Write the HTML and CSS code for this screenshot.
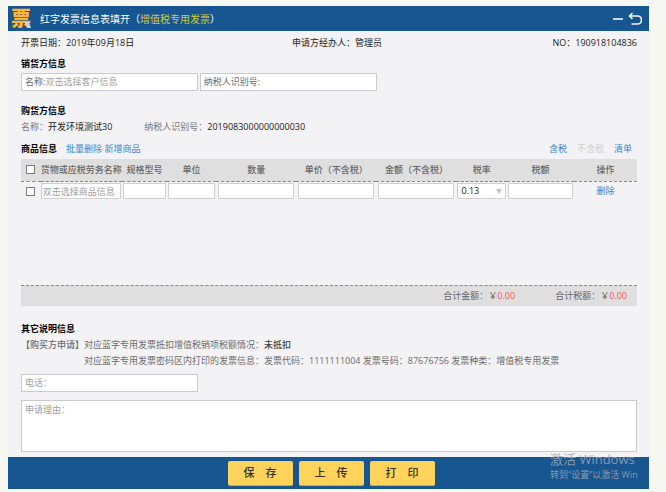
FILE: index.html
```html
<!DOCTYPE html>
<html lang="zh-CN">
<head>
<meta charset="utf-8">
<meta name="viewport" content="width=device-width, initial-scale=1">
<title>红字发票信息表填开</title>
<link rel="stylesheet" href="styles.css">
</head>
<body>
<div class="app">
  <header class="titlebar">
    <span class="logo">票<svg class="logo-fold" viewBox="0 0 6 6" aria-hidden="true"><path d="M0 0h4l2 6H2z"/></svg></span>
    <h1 class="title">红字发票信息表填开（<span class="title-type">增值税专用发票</span>）</h1>
    <button class="icon-btn" type="button" aria-label="最小化"><svg width="12" height="14" viewBox="0 0 12 14"><path d="M1 7h10"/></svg></button>
    <button class="icon-btn" type="button" aria-label="返回"><svg width="14" height="14" viewBox="0 0 14 14"><path d="M2 4H9.500a3.500 3.500 0 0 1 0 8H3.500M4.500 1 1.500 4l3 3"/></svg></button>
  </header>

  <main class="content">
    <div class="meta">
      <span>开票日期：2019年09月18日</span>
      <span>申请方经办人：管理员</span>
      <span>NO：190918104836</span>
    </div>

    <section class="seller">
      <h2>销货方信息</h2>
      <div class="fields">
        <div class="field"><label for="name">名称:</label><input id="name" type="text" placeholder="双击选择客户信息"></div>
        <div class="field"><label for="taxno">纳税人识别号:</label><input id="taxno" type="text"></div>
      </div>
    </section>

    <section class="buyer">
      <h2>购货方信息</h2>
      <div class="buyer-row">
        <span>名称：<b>开发环境测试30</b></span>
        <span>纳税人识别号：<b>2019083000000000030</b></span>
      </div>
    </section>

    <section class="goods">
      <div class="goods-head">
        <h2>商品信息</h2>
        <div class="goods-edit"><a href="#">批量删除</a> <a href="#">新增商品</a></div>
        <nav class="goods-mode"><a href="#">含税</a><span class="off">不含税</span><a href="#">清单</a></nav>
      </div>
      <div class="goods-body">
        <table>
          <colgroup>
            <col class="c-check"><col class="c-item"><col class="c-spec"><col class="c-unit"><col class="c-num"><col class="c-num"><col class="c-num"><col class="c-rate"><col class="c-tax"><col class="c-op">
          </colgroup>
          <thead>
            <tr>
              <th class="check"><input type="checkbox" aria-label="全选"></th>
              <th class="item">货物或应税劳务名称</th><th>规格型号</th><th>单位</th><th>数量</th><th>单价（不含税）</th><th>金额（不含税）</th><th>税率</th><th>税额</th><th>操作</th>
            </tr>
          </thead>
          <tbody>
            <tr>
              <td class="check"><input type="checkbox" aria-label="选择"></td>
              <td class="item"><input class="cell" type="text" aria-label="货物或应税劳务名称" placeholder="双击选择商品信息"></td>
              <td><input class="cell" type="text" aria-label="规格型号"></td>
              <td><input class="cell" type="text" aria-label="单位"></td>
              <td class="wide"><input class="cell" type="text" aria-label="数量"></td>
              <td class="wide"><input class="cell" type="text" aria-label="单价"></td>
              <td class="wide"><input class="cell" type="text" aria-label="金额"></td>
              <td><div class="select"><select class="cell" aria-label="税率"><option>0.13</option></select></div></td>
              <td><input class="cell" type="text" aria-label="税额"></td>
              <td><a href="#">删除</a></td>
            </tr>
          </tbody>
        </table>
      </div>
      <div class="totals">
        <span>合计金额：￥<em>0.00</em></span>
        <span>合计税额：￥<em>0.00</em></span>
      </div>
    </section>

    <section class="notes">
      <h2>其它说明信息</h2>
      <div class="notes-row">
        <strong>【购买方申请】</strong>
        <div>
          <p>对应蓝字专用发票抵扣增值税销项税额情况：<b>未抵扣</b></p>
          <p>对应蓝字专用发票密码区内打印的发票信息：发票代码：1111111004 发票号码：87676756 发票种类：增值税专用发票</p>
        </div>
      </div>
      <div class="field phone"><input type="text" aria-label="电话" placeholder="电话："></div>
      <textarea class="reason" aria-label="申请理由" placeholder="申请理由："></textarea>
    </section>
  </main>

  <footer class="actions">
    <button type="button">保　存</button>
    <button type="button">上　传</button>
    <button type="button">打　印</button>
  </footer>
  <div class="watermark"><p class="watermark-title">激活 Windows</p><p>转到“设置”以激活 Win</p></div>
</div>
</body>
</html>
```
FILE: styles.css
```css
* {
  box-sizing: border-box;
}

body {
  margin: 0;
  padding: 6px 17px 3px 8px;
  background: #f8f8f2;
  color: #1c1c1c;
  font: 9px/16px "Open Sans", "Noto Sans CJK SC", sans-serif;
}

h1, h2, p {
  margin: 0;
}

h2 {
  font-size: 9px;
  font-weight: 700;
  color: #000;
}

b {
  font-weight: 400;
  color: #1c1c1c;
}

a {
  color: #3c87d0;
  text-decoration: none;
}

input, select, textarea, button {
  font: inherit;
  color: inherit;
  margin: 0;
}

::placeholder {
  color: #a0a0a0;
  opacity: 1;
}

.app {
  position: relative;
  overflow: hidden;
  background: #f3f2f4;
}

/* Title bar */
.titlebar {
  display: flex;
  align-items: center;
  height: 25px;
  padding: 0 7px 0 3px;
  background: #175691;
  color: #fff;
}

.logo {
  position: relative;
  margin-right: 9px;
  font-size: 20px;
  font-weight: 900;
  line-height: 24px;
  color: #fbb829;
}

.logo-fold {
  position: absolute;
  right: 0;
  bottom: 3px;
  width: 6px;
  height: 6px;
  fill: #c9d3dd;
}

.title {
  flex: 1;
  font-size: 10px;
  font-weight: 400;
}

.title-type {
  color: #d3ca35;
}

.icon-btn {
  display: flex;
  margin-left: 4px;
  padding: 0;
  border: 0;
  background: none;
}

.icon-btn path {
  fill: none;
  stroke: #f4f8fc;
  stroke-width: 1.6;
}

/* Form body */
.content {
  padding: 4px 12px 5px 13px;
}

.meta {
  display: grid;
  grid-template-columns: 44% 1fr auto;
  margin-bottom: 5px;
}

.fields {
  display: flex;
  gap: 2px;
  margin: 1px 0 12px;
}

.field {
  display: flex;
  align-items: center;
  width: 28.7%;
  height: 18px;
  padding: 0 3px;
  border: 1px solid #cbcbcf;
  background: #fff;
  color: #6c6c6c;
}

.field label {
  flex: none;
}

.field input {
  flex: 1;
  min-width: 0;
  height: 16px;
  padding: 0;
  border: 0;
  background: none;
  outline: 0;
}

.buyer-row {
  display: flex;
  gap: 32px;
  color: #7a7a7a;
}

.goods-head {
  display: flex;
  margin: 6px 0 2px;
}

.goods-edit {
  margin-left: 9px;
}

.goods-mode {
  display: flex;
  gap: 10px;
  margin-left: auto;
  padding-right: 5px;
}

.off {
  color: #cfcfd1;
}

.goods-body {
  min-height: 126px;
}

table {
  width: 100%;
  table-layout: fixed;
  border-collapse: collapse;
}

.c-check { width: 3.2%; }
.c-item { width: 13.2%; }
.c-spec { width: 7.3%; }
.c-unit { width: 8%; }
.c-num { width: 13%; }
.c-rate { width: 8.2%; }
.c-tax { width: 10.9%; }
.c-op { width: 10.2%; }

th {
  height: 22px;
  padding: 0;
  border-bottom: 1px dashed #8a8a8a;
  background: #dfdfe0;
  color: #666;
  font-weight: 500;
  white-space: nowrap;
}

td {
  height: 20px;
  padding: 1px 1px;
  text-align: center;
}

td.wide {
  padding: 1px 2px;
}

.check {
  padding: 0 0 0 5px;
  text-align: left;
}

.item {
  padding-left: 0;
  text-align: left;
}

input[type="checkbox"] {
  display: block;
  appearance: none;
  width: 9px;
  height: 9px;
  border: 1px solid #7d7d7d;
  background: #fff;
}

input[type="checkbox"]:checked {
  background: #175691;
}

.cell {
  display: block;
  width: 100%;
  height: 16px;
  padding: 0 1px;
  border: 1px solid #d0d0d4;
  border-radius: 0;
  background: #fff;
  line-height: 14px;
  outline: 0;
}

.select {
  position: relative;
}

.select .cell {
  appearance: none;
  padding-left: 3px;
}

.select::after {
  content: "";
  position: absolute;
  top: 6px;
  right: 4px;
  border: 3px solid transparent;
  border-top: 5px solid #c4c4c8;
  border-bottom: 0;
  pointer-events: none;
}

.totals {
  display: flex;
  justify-content: flex-end;
  gap: 40px;
  height: 21px;
  padding: 2px 10px 0 0;
  border-top: 1px dashed #8a8a8a;
  background: #dfdfe0;
  color: #666;
}

.totals em {
  color: #f0585c;
  font-style: normal;
}

.notes {
  margin-top: 15px;
}

.notes-row {
  display: flex;
  color: #6c6c6c;
}

.notes-row strong {
  font-weight: 500;
}

.notes-row b {
  color: #444;
  font-weight: 500;
}

.phone {
  margin: 5px 0 8px;
}

.reason {
  display: block;
  width: 100%;
  height: 52px;
  padding: 1px 3px;
  border: 1px solid #cbcbcf;
  background: #fff;
  resize: none;
  outline: 0;
}

/* Bottom action bar */
.actions {
  display: flex;
  justify-content: center;
  gap: 6px;
  padding: 4px 0 3px 5px;
  background: #175691;
}

.actions button {
  width: 65px;
  height: 25px;
  padding: 0;
  border: 0;
  border-bottom: 1px solid #c9a950;
  border-radius: 2px;
  background: #fed35b;
  color: #33301f;
  font-size: 11px;
  font-weight: 500;
}

.watermark {
  position: absolute;
  bottom: 6px;
  left: calc(100% - 99px);
  color: #a3acb6;
  opacity: 0.8;
  white-space: nowrap;
  pointer-events: none;
}

.watermark-title {
  font-size: 13px;
}
```
